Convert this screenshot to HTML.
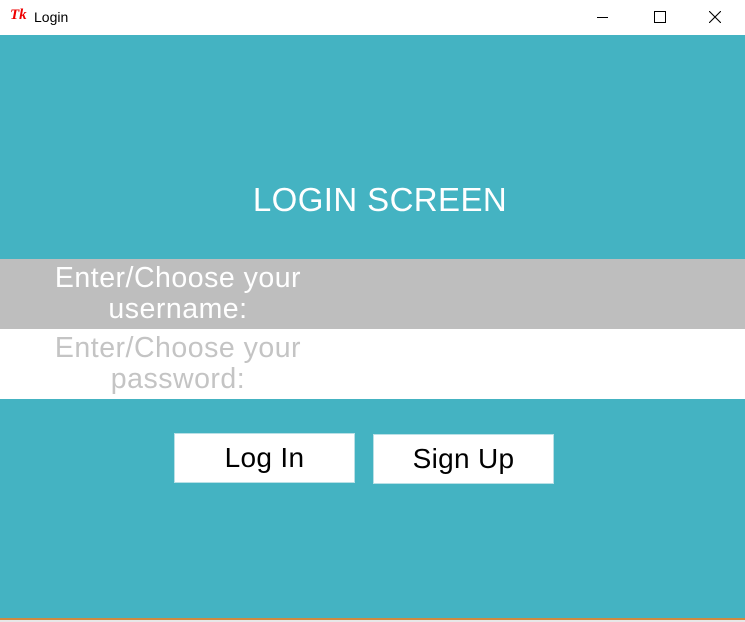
<!DOCTYPE html>
<html><head><style>
body{margin:0;width:745px;height:622px;overflow:hidden;background:#e8e8e8;font-family:"Liberation Sans",sans-serif;position:relative}
.a{position:absolute}
.t{text-align:center;font-size:28.5px;letter-spacing:0.5px;line-height:31px;white-space:nowrap}
.btn{position:absolute;background:#fff;color:#000;font-size:28px;letter-spacing:0.3px;text-align:center;line-height:48px;box-sizing:border-box;border:1px solid #b8e0e6}
</style></head><body>
<div class="a" style="left:0;top:0;width:745px;height:35px;background:#fff"></div>
<div class="a" style="left:10px;top:7px;font-size:15px;font-weight:bold;font-style:italic;color:#e00;font-family:'Liberation Serif',serif">Tk</div>
<div class="a" style="left:34px;top:9px;font-size:14px;color:#000">Login</div>
<div class="a" style="left:597px;top:17px;width:11px;height:1px;background:#000"></div>
<div class="a" style="left:654px;top:11px;width:10px;height:10px;border:1px solid #000"></div>
<svg class="a" style="left:709px;top:11px" width="12" height="12"><path d="M0 0L12 12M12 0L0 12" stroke="#000" stroke-width="1.1"/></svg>
<div class="a" style="left:0;top:35px;width:745px;height:583px;background:#44b3c2"></div>
<div class="a" style="left:0;top:618px;width:745px;height:2px;background:#d08a40"></div>
<div class="a" style="left:0;top:259px;width:745px;height:70px;background:#bebebe"></div>
<div class="a" style="left:0;top:329px;width:745px;height:70px;background:#fff"></div>
<div class="a" style="left:0;top:181px;width:760px;text-align:center;color:#fff;font-size:33px;letter-spacing:0.4px">LOGIN SCREEN</div>
<div class="a t" style="left:28px;top:263px;width:300px;color:#fff">Enter/Choose your<br>username:</div>
<div class="a t" style="left:28px;top:333px;width:300px;color:#c4c4c4">Enter/Choose your<br>password:</div>
<div class="btn" style="left:174px;top:433px;width:181px;height:50px">Log In</div>
<div class="btn" style="left:373px;top:434px;width:181px;height:50px">Sign Up</div>
</body></html>
